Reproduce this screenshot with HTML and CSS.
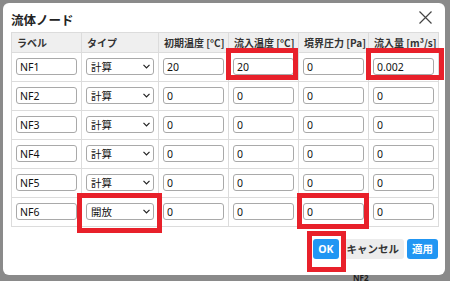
FILE: index.html
```html
<!DOCTYPE html>
<html lang="ja">
<head>
<meta charset="utf-8">
<title>流体ノード</title>
<link rel="stylesheet" href="styles.css">
</head>
<body>
<div class="dialog">
  <div class="head">
    <h1 class="title">流体ノード</h1>
    <button class="close" aria-label="閉じる"><svg width="13" height="13" viewBox="0 0 13 13"><path d="M0.5 0.5L12.5 12.5M12.5 0.5L0.5 12.5" stroke="#444" stroke-width="1.2" fill="none"/></svg></button>
  </div>
  <table class="grid">
    <colgroup><col class="c1"><col class="c2"><col class="c3"><col class="c3"><col class="c3"><col class="c3"></colgroup>
    <thead>
      <tr><th>ラベル</th><th>タイプ</th><th>初期温度 [°C]</th><th>流入温度 [°C]</th><th>境界圧力 [Pa]</th><th>流入量 [m³/s]</th></tr>
    </thead>
    <tbody>
      <tr><td><input class="inp" value="NF1"></td><td><div class="sel"><select><option>計算</option><option>開放</option></select><svg class="chev" width="7" height="5" viewBox="0 0 7 5"><path d="M0.5 0.8L3.5 3.8L6.5 0.8" stroke="#222" stroke-width="1.2" fill="none"/></svg></div></td><td><input class="inp" value="20"></td><td><input class="inp" value="20"></td><td><input class="inp" value="0"></td><td><input class="inp" value="0.002"></td></tr>
      <tr><td><input class="inp" value="NF2"></td><td><div class="sel"><select><option>計算</option><option>開放</option></select><svg class="chev" width="7" height="5" viewBox="0 0 7 5"><path d="M0.5 0.8L3.5 3.8L6.5 0.8" stroke="#222" stroke-width="1.2" fill="none"/></svg></div></td><td><input class="inp" value="0"></td><td><input class="inp" value="0"></td><td><input class="inp" value="0"></td><td><input class="inp" value="0"></td></tr>
      <tr><td><input class="inp" value="NF3"></td><td><div class="sel"><select><option>計算</option><option>開放</option></select><svg class="chev" width="7" height="5" viewBox="0 0 7 5"><path d="M0.5 0.8L3.5 3.8L6.5 0.8" stroke="#222" stroke-width="1.2" fill="none"/></svg></div></td><td><input class="inp" value="0"></td><td><input class="inp" value="0"></td><td><input class="inp" value="0"></td><td><input class="inp" value="0"></td></tr>
      <tr><td><input class="inp" value="NF4"></td><td><div class="sel"><select><option>計算</option><option>開放</option></select><svg class="chev" width="7" height="5" viewBox="0 0 7 5"><path d="M0.5 0.8L3.5 3.8L6.5 0.8" stroke="#222" stroke-width="1.2" fill="none"/></svg></div></td><td><input class="inp" value="0"></td><td><input class="inp" value="0"></td><td><input class="inp" value="0"></td><td><input class="inp" value="0"></td></tr>
      <tr><td><input class="inp" value="NF5"></td><td><div class="sel"><select><option>計算</option><option>開放</option></select><svg class="chev" width="7" height="5" viewBox="0 0 7 5"><path d="M0.5 0.8L3.5 3.8L6.5 0.8" stroke="#222" stroke-width="1.2" fill="none"/></svg></div></td><td><input class="inp" value="0"></td><td><input class="inp" value="0"></td><td><input class="inp" value="0"></td><td><input class="inp" value="0"></td></tr>
      <tr><td><input class="inp" value="NF6"></td><td><div class="sel"><select><option>開放</option><option>計算</option></select><svg class="chev" width="7" height="5" viewBox="0 0 7 5"><path d="M0.5 0.8L3.5 3.8L6.5 0.8" stroke="#222" stroke-width="1.2" fill="none"/></svg></div></td><td><input class="inp" value="0"></td><td><input class="inp" value="0"></td><td><input class="inp" value="0"></td><td><input class="inp" value="0"></td></tr>
    </tbody>
  </table>
  <div class="actions">
    <button class="btn primary">OK</button>
    <button class="btn">キャンセル</button>
    <button class="btn primary">適用</button>
  </div>
  <div class="mark m1"></div>
  <div class="mark m2"></div>
  <div class="mark m3"></div>
  <div class="mark m4"></div>
  <div class="mark m5"></div>
</div>
<div class="under">NF2</div>
</body>
</html>
```
FILE: styles.css
```css
* { box-sizing: border-box; }
html, body { margin: 0; height: 100%; }
body {
  background: #8a8a8a;
  font-family: "Noto Sans", "Noto Sans CJK JP", sans-serif;
  color: #222;
  overflow: hidden;
  padding-top: 3px;
}
.dialog {
  position: relative;
  margin-left: 3px;
  width: 442px;
  height: 272px;
  background: #fff;
  border-radius: 6px;
  padding: 0 7px 0 8px;
}
.head {
  display: flex;
  justify-content: space-between;
  align-items: flex-start;
  height: 29px;
}
.title {
  margin: 8px 0 0 0;
  font-family: "Noto Sans CJK JP", sans-serif;
  font-size: 12.5px;
  font-weight: 700;
  line-height: 18px;
  color: #222;
}
.close {
  margin: 8px 6px 0 0;
  padding: 0;
  border: 0;
  background: none;
  width: 13px;
  height: 13px;
  display: block;
}
.close svg { display: block; }
.grid {
  width: 427px;
  table-layout: fixed;
  border-collapse: collapse;
}
.c1 { width: 70px; }
.c2 { width: 77px; }
.c3 { width: 70px; }
.grid th, .grid td { border: 1px solid #dcdcdc; }
.grid th {
  background: #efefef;
  height: 20px;
  padding: 0 2px 0 5px;
  text-align: left;
  font-family: "Noto Sans CJK JP", sans-serif;
  font-size: 10px;
  font-weight: 700;
  line-height: 19px;
  color: #333;
  white-space: nowrap;
  overflow: hidden;
}
.grid td {
  padding: 5px 4px 6px 4px;
}
.inp, .sel select {
  display: block;
  width: 100%;
  height: 17px;
  margin: 0;
  border: 1px solid #a9a9a9;
  border-radius: 3px;
  padding: 0 3px;
  font-family: "Noto Sans", "Noto Sans CJK JP", sans-serif;
  font-size: 10.5px;
  color: #111;
  background: #fff;
  outline: none;
}
.sel { position: relative; }
.sel select {
  -webkit-appearance: none;
  appearance: none;
  padding: 0 12px 0 4px;
  font-family: "Noto Sans CJK JP", sans-serif;
}
.chev {
  position: absolute;
  right: 4px;
  top: 6px;
  pointer-events: none;
}
.actions {
  display: flex;
  justify-content: flex-end;
  gap: 3px;
  margin-top: 12px;
}
.btn {
  height: 20px;
  padding: 0 5px;
  border: 0;
  border-radius: 3px;
  background: #ececec;
  color: #333;
  font-family: "Noto Sans", "Noto Sans CJK JP", sans-serif;
  font-size: 10.5px;
  font-weight: 700;
  line-height: 20px;
}
.btn.primary {
  background: #2196f3;
  color: #fff;
}
.mark {
  position: absolute;
  border: 5px solid #e8202a;
}
.m1 { left: 223px; top: 45px; width: 72px; height: 32px; }
.m2 { left: 363px; top: 45px; width: 78px; height: 32px; }
.m3 { left: 74px; top: 190px; width: 85px; height: 40px; }
.m4 { left: 294px; top: 190px; width: 72px; height: 36px; }
.m5 { left: 304px; top: 228px; width: 39px; height: 41px; }
.under {
  padding-left: 353px;
  font-family: "Noto Sans", sans-serif;
  font-size: 8px;
  font-weight: 700;
  line-height: 6px;
  padding-top: 0;
  color: #222;
}
```
